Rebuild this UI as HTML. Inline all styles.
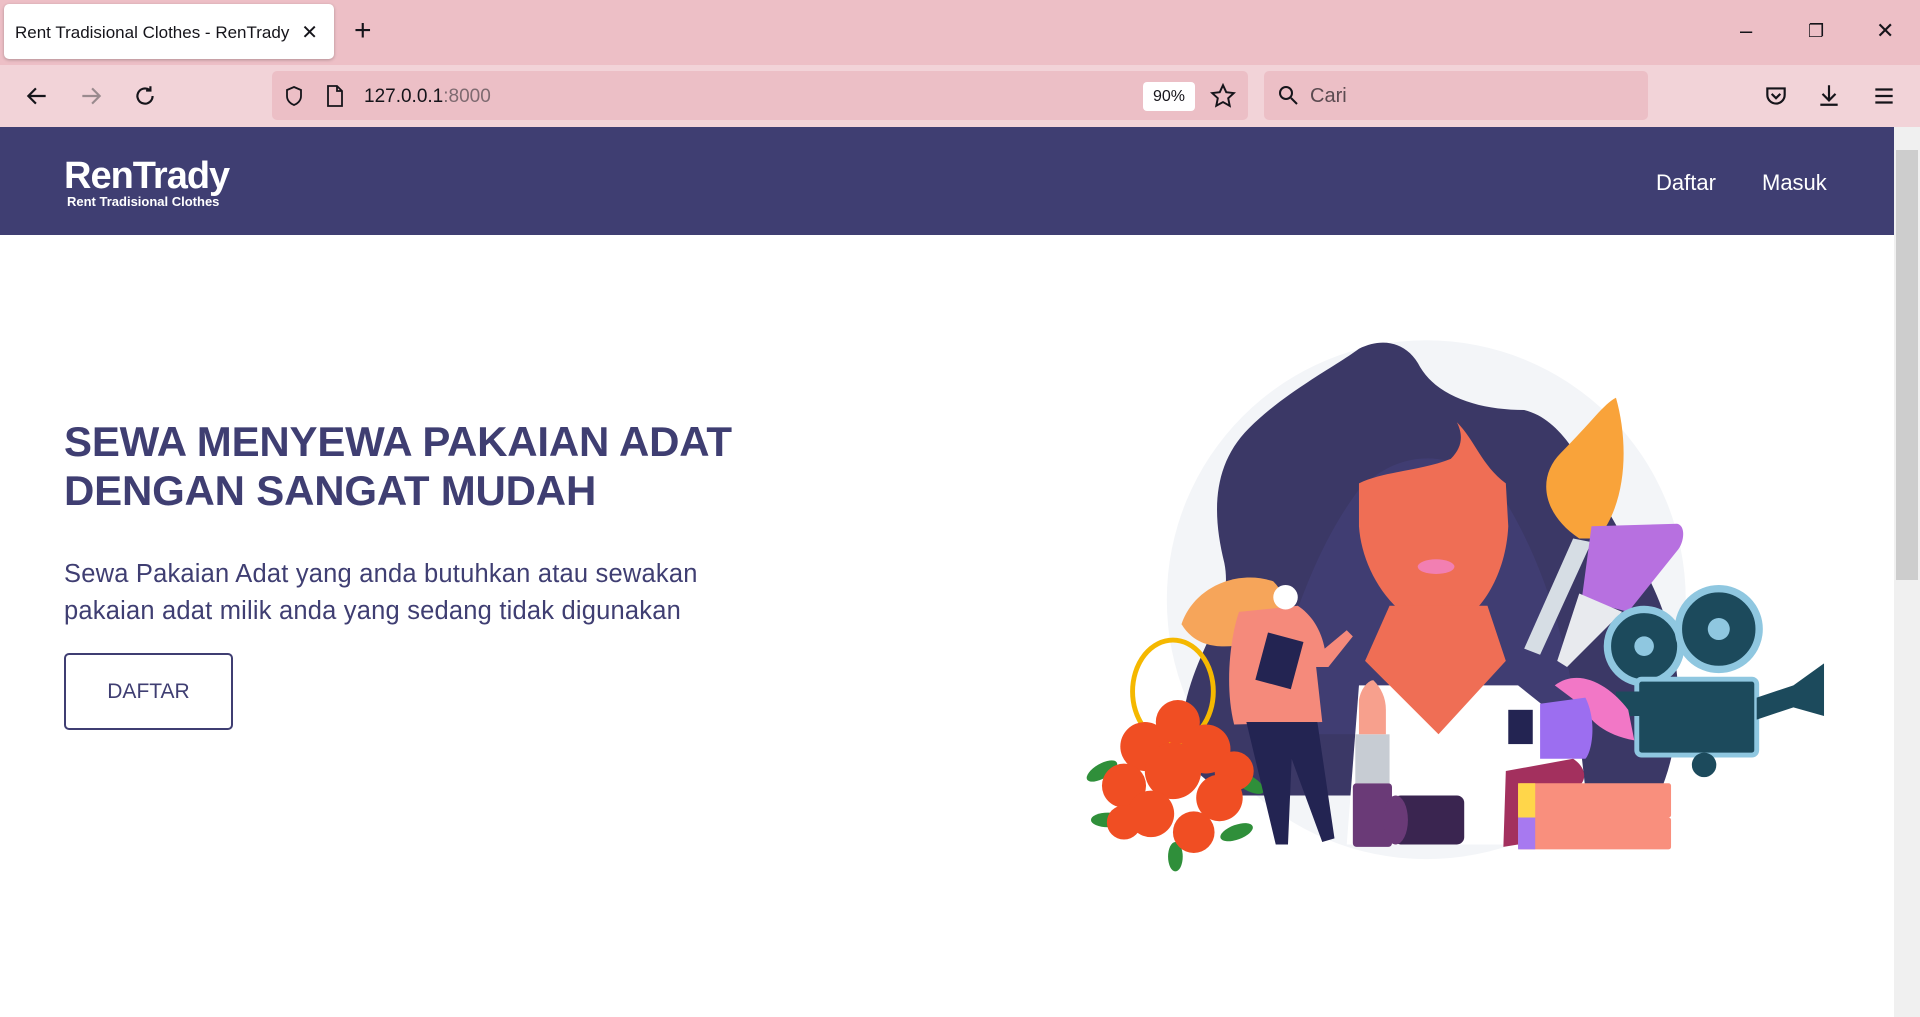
<!DOCTYPE html>
<html><head><meta charset="utf-8"><style>
*{margin:0;padding:0;box-sizing:border-box}
body{width:1920px;height:1017px;overflow:hidden;font-family:"Liberation Sans",sans-serif;background:#fff;position:relative}
.tabbar{position:absolute;left:0;top:0;width:1920px;height:65px;background:#edbfc6}
.tab{position:absolute;left:4px;top:4px;width:330px;height:55px;background:#fff;border-radius:5px;box-shadow:0 1px 3px rgba(0,0,0,.25);font-size:17px;color:#15141a;padding:19px 0 0 11px}
.tab .x{position:absolute;right:16px;top:16px;font-size:20px}
.plus{position:absolute;left:354px;top:14px;font-size:30px;color:#15141a;font-weight:300}
.win{position:absolute;top:18px;font-size:22px;color:#15141a}
.toolbar{position:absolute;left:0;top:65px;width:1920px;height:62px;background:#f2d3d8}
.url{position:absolute;left:272px;top:6px;width:976px;height:49px;background:#ecbfc6;border-radius:5px}
.url .t{position:absolute;left:92px;top:15px;font-size:19px;color:#15141a}
.url .t span{color:#7e6a70}
.zoom{position:absolute;left:871px;top:11px;width:52px;height:29px;background:#fff;border-radius:4px;font-size:16px;text-align:center;line-height:29px;color:#15141a}
.search{position:absolute;left:1264px;top:6px;width:384px;height:49px;background:#ecbfc6;border-radius:5px}
.search .t{position:absolute;left:46px;top:14px;font-size:20px;color:#5b4a50}
.nav{position:absolute;left:0;top:127px;width:1894px;height:108px;background:#3f3e72}
.logo{position:absolute;left:64px;top:30px;color:#fff;font-weight:bold;font-size:38px;letter-spacing:-1px;line-height:38px}
.logo small{display:block;font-size:13px;letter-spacing:0;line-height:14px;margin-left:3px}
.nav a{position:absolute;top:43px;color:#fff;font-size:22px;text-decoration:none}
.scroll{position:absolute;left:1894px;top:127px;width:26px;height:890px;background:#f0f0f0}
.thumb{position:absolute;left:1896px;top:150px;width:22px;height:430px;background:#cdcdcd}
h1{position:absolute;left:64px;top:417px;font-size:42px;line-height:49px;color:#3f3e72;font-weight:bold;letter-spacing:-0.2px}
p{position:absolute;left:64px;top:556px;font-size:25.5px;line-height:37px;color:#3f3e72;letter-spacing:0.2px}
.btn{position:absolute;left:64px;top:653px;width:169px;height:77px;border:2px solid #3f3e72;border-radius:5px;color:#3f3e72;font-size:21px;text-align:center;line-height:73px}
</style></head><body>
<div class="tabbar">
<div class="tab">Rent Tradisional Clothes - RenTrady<span class="x">✕</span></div>
<div class="plus">+</div>
<div class="win" style="left:1740px">–</div>
<div class="win" style="left:1808px;font-size:18px;top:21px">❐</div>
<div class="win" style="left:1876px">✕</div>
</div>
<div class="toolbar">
<svg style="position:absolute;left:24px;top:18px" width="26" height="26" viewBox="0 0 24 24" fill="none" stroke="#15141a" stroke-width="2"><path d="M20 12H5M11 5l-7 7 7 7"/></svg>
<svg style="position:absolute;left:78px;top:18px" width="26" height="26" viewBox="0 0 24 24" fill="none" stroke="#9a8a8e" stroke-width="2"><path d="M4 12h15M13 5l7 7-7 7"/></svg>
<svg style="position:absolute;left:132px;top:18px" width="26" height="26" viewBox="0 0 24 24" fill="none" stroke="#15141a" stroke-width="2"><path d="M19 12a7 7 0 1 1-3-5.7M17 3v4h-4"/></svg>
<div class="url">
<svg style="position:absolute;left:10px;top:13px" width="24" height="24" viewBox="0 0 24 24" fill="none" stroke="#15141a" stroke-width="1.8"><path d="M12 3l7 3v6c0 5-4 8-7 9-3-1-7-4-7-9V6z"/></svg>
<svg style="position:absolute;left:52px;top:13px" width="22" height="24" viewBox="0 0 22 24" fill="none" stroke="#15141a" stroke-width="1.8"><path d="M4 2h9l5 5v15H4zM13 2v5h5"/></svg>
<div class="t">127.0.0.1<span>:8000</span></div>
<div class="zoom">90%</div>
<svg style="position:absolute;left:938px;top:12px" width="26" height="26" viewBox="0 0 24 24" fill="none" stroke="#15141a" stroke-width="1.8"><path d="M12 2l3 6.5 7 .8-5.2 4.8 1.4 7L12 17.6 5.8 21l1.4-7L2 9.3l7-.8z"/></svg>
</div>
<div class="search">
<svg style="position:absolute;left:12px;top:12px" width="24" height="24" viewBox="0 0 24 24" fill="none" stroke="#15141a" stroke-width="2"><circle cx="10" cy="10" r="6"/><path d="M15 15l6 6"/></svg>
<div class="t">Cari</div></div>
<svg style="position:absolute;left:1763px;top:18px" width="26" height="26" viewBox="0 0 24 24" fill="none" stroke="#15141a" stroke-width="2"><path d="M4 5h16v6a8 8 0 0 1-16 0zM8 10l4 4 4-4"/></svg>
<svg style="position:absolute;left:1816px;top:17px" width="26" height="26" viewBox="0 0 24 24" fill="none" stroke="#15141a" stroke-width="2"><path d="M12 3v13M6 11l6 6 6-6M4 21h16"/></svg>
<svg style="position:absolute;left:1871px;top:18px" width="26" height="26" viewBox="0 0 24 24" fill="none" stroke="#15141a" stroke-width="2"><path d="M4 6h16M4 12h16M4 18h16"/></svg>
</div>
<div class="nav">
<div class="logo">RenTrady<small>Rent Tradisional Clothes</small></div>
<a style="left:1656px">Daftar</a><a style="left:1762px">Masuk</a>
</div>
<div class="scroll"></div><div class="thumb"></div>
<h1>SEWA MENYEWA PAKAIAN ADAT<br>DENGAN SANGAT MUDAH</h1>
<p>Sewa Pakaian Adat yang anda butuhkan atau sewakan<br>pakaian adat milik anda yang sedang tidak digunakan</p>
<div class="btn">DAFTAR</div>

<svg style="position:absolute;left:0;top:0" width="1920" height="1017" viewBox="0 0 1568 831">
<circle cx="1165" cy="490" r="212" fill="#f3f5f8"/>
<path d="M965 620 C960 540 1010 510 1000 460 C990 420 990 380 1020 350 C1050 320 1090 300 1110 285 C1130 275 1150 280 1160 300 C1175 325 1210 335 1245 335 C1285 345 1300 400 1330 445 C1370 500 1385 580 1355 650 L1000 650 Z" fill="#3b3866"/>
<path d="M1040 560 C1060 490 1080 440 1110 400 C1150 360 1200 370 1230 410 C1260 460 1280 520 1290 600 L1040 600 Z" fill="#44417a" opacity=".6"/>
<path d="M1110 560 L1240 560 L1290 600 L1300 690 L1100 690 Z" fill="#fff"/>
<path d="M1110 395 C1130 385 1160 385 1185 375 C1195 365 1195 355 1190 345 C1205 360 1210 380 1230 395 L1232 430 C1230 470 1210 500 1190 510 L1160 510 C1130 495 1112 460 1110 430 Z" fill="#ef6e55"/>
<path d="M1135 495 L1215 495 L1230 540 L1175 600 L1115 540 Z" fill="#ef6e55"/>
<ellipse cx="1173" cy="463" rx="15" ry="6" fill="#f27fb2"/>
<path d="M1290 440 C1260 420 1255 390 1275 370 C1300 345 1310 330 1320 325 C1330 360 1330 410 1305 440 Z" fill="#f9a33a"/>
<path d="M1285 440 L1300 443 L1258 535 L1245 530 Z" fill="#d6dde4"/>
<path d="M1300 430 L1370 428 C1378 430 1375 445 1370 450 L1330 500 L1292 490 Z" fill="#b770e0"/>
<path d="M1290 485 L1325 500 L1280 545 L1272 540 Z" fill="#e8eaee"/>
<circle cx="1343" cy="528" r="30" fill="#1c4a5c" stroke="#8fc7e0" stroke-width="6"/>
<circle cx="1343" cy="528" r="8" fill="#8fc7e0"/>
<circle cx="1404" cy="514" r="33" fill="#1c4a5c" stroke="#8fc7e0" stroke-width="6"/>
<circle cx="1404" cy="514" r="9" fill="#8fc7e0"/>
<rect x="1337" y="555" width="98" height="62" rx="4" fill="#1c4a5c" stroke="#8fc7e0" stroke-width="4"/>
<path d="M1320 565 L1340 565 L1340 585 L1320 585 Z" fill="#1c4a5c"/>
<path d="M1435 570 L1465 560 L1490 542 L1490 585 L1465 578 L1435 588 Z" fill="#1c4a5c"/>
<circle cx="1392" cy="625" r="10" fill="#1c4a5c"/>
<ellipse cx="958" cy="565" rx="33" ry="42" fill="none" stroke="#f5b800" stroke-width="4"/>
<g fill="#2f8f3a"><ellipse cx="900" cy="630" rx="14" ry="6" transform="rotate(-30 900 630)"/><ellipse cx="1020" cy="640" rx="14" ry="6" transform="rotate(30 1020 640)"/><ellipse cx="905" cy="670" rx="14" ry="6"/><ellipse cx="1010" cy="680" rx="14" ry="6" transform="rotate(-20 1010 680)"/><ellipse cx="960" cy="700" rx="6" ry="12"/></g>
<g fill="#f04e23"><circle cx="935" cy="610" r="20"/><circle cx="962" cy="590" r="18"/><circle cx="985" cy="612" r="20"/><circle cx="1008" cy="630" r="16"/><circle cx="918" cy="642" r="18"/><circle cx="958" cy="630" r="23"/><circle cx="996" cy="652" r="19"/><circle cx="940" cy="665" r="19"/><circle cx="975" cy="680" r="17"/><circle cx="918" cy="672" r="14"/></g>
<path d="M965 510 C975 480 1010 465 1040 475 C1055 490 1050 510 1040 520 C1010 530 980 535 965 510 Z" fill="#f6a55a"/>
<path d="M1012 500 L1060 495 C1075 505 1080 520 1082 530 L1100 515 L1105 520 L1085 545 L1075 545 L1080 590 L1008 592 C1000 560 1005 520 1012 500 Z" fill="#f58a7b"/>
<circle cx="1050" cy="488" r="10" fill="#fff"/>
<rect x="1030" y="520" width="30" height="40" fill="#232452" transform="rotate(15 1045 540)"/>
<path d="M1018 590 L1076 590 L1090 685 L1080 688 L1055 620 L1052 690 L1042 690 Z" fill="#232452"/>
<rect x="1105" y="640" width="32" height="52" rx="3" fill="#6a3a77"/>
<rect x="1107" y="600" width="28" height="40" fill="#c7ccd3"/>
<path d="M1110 600 L1110 572 C1112 560 1120 555 1122 556 C1128 562 1132 570 1132 580 L1132 600 Z" fill="#f7a08d"/>
<rect x="1138" y="650" width="58" height="40" rx="6" fill="#3a2550"/>
<ellipse cx="1140" cy="670" rx="10" ry="20" fill="#6a3a77"/>
<path d="M1270 560 C1290 545 1315 560 1330 580 L1335 605 C1310 600 1300 590 1290 575 Z" fill="#f277c6"/>
<path d="M1258 575 L1295 570 C1305 590 1300 615 1295 620 L1258 620 Z" fill="#9c6ef0"/>
<rect x="1232" y="580" width="20" height="28" fill="#232452"/>
<path d="M1230 630 L1285 620 C1300 630 1295 645 1280 645 L1245 645 L1240 690 L1228 692 Z" fill="#a3305e"/>
<rect x="1240" y="640" width="125" height="28" rx="2" fill="#f98f7d"/>
<rect x="1240" y="640" width="14" height="28" fill="#ffd64a"/>
<rect x="1240" y="668" width="125" height="26" rx="2" fill="#f98f7d"/>
<rect x="1240" y="668" width="14" height="26" fill="#a779f0"/>
</svg>
</body></html>
